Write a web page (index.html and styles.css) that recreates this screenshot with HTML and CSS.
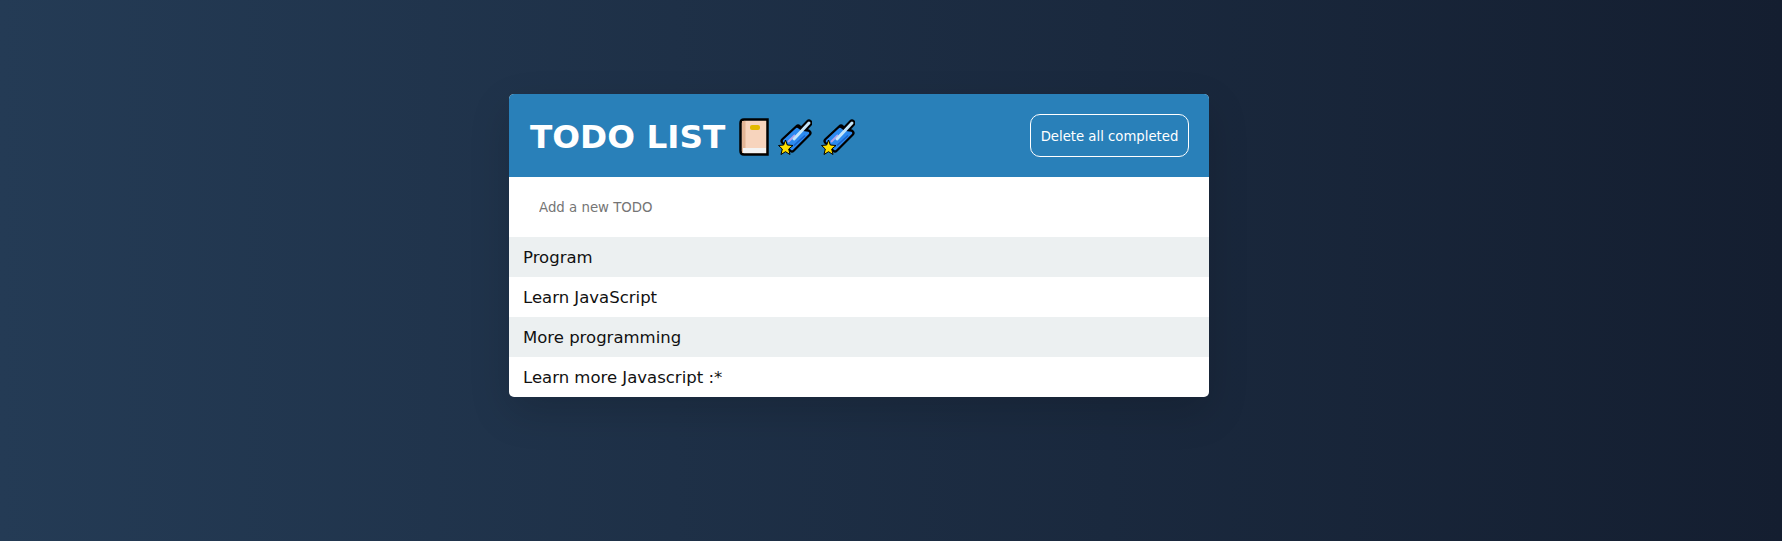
FILE: index.html
```html
<!DOCTYPE html>
<html lang="en">
<head>
    <meta charset="UTF-8">
    <title>TODO List</title>
    <link rel="stylesheet" href="styles.css">
</head>
<body>
    <div class="todo-card">
        <div class="todo-header">
            <h1 class="todo-title">
                TODO LIST
                <span class="todo-icons">
                    <svg class="icon-book" width="30" height="38" viewBox="0 0 30 38">
                        <path d="M5 1.500 H28.500 V36.500 H5 Q1.500 36.500 1.500 33 V5 Q1.500 1.500 5 1.500 Z" fill="#f7d4bd" stroke="#000" stroke-width="2.500"/>
                        <rect x="3" y="3" width="3.500" height="32" fill="#e3b596"/>
                        <rect x="4" y="30" width="23" height="5" fill="#f3f3f3"/>
                        <rect x="11" y="7" width="10" height="5" rx="2" fill="#e2b900"/>
                    </svg>
                    <svg class="icon-star" width="34" height="38" viewBox="0 0 34 38">
                        <path d="M10 27 L31 5 M6 23 L20 10 M14 31 L30 15" stroke="#000" stroke-width="7" stroke-linecap="round"/>
                        <path d="M6 24 L20 10 L30 15 L14 31 Z" fill="#000"/>
                        <path d="M6 23 L19 11 L23 14 L30 15 L14 31 Z" fill="#2b8af0" stroke="#2b8af0" stroke-width="2.500" stroke-linejoin="round"/>
                        <path d="M16 27.500 L27 17.500" stroke="#1b62c8" stroke-width="1.500"/>
                        <path d="M10 24 L17 17" stroke="#b3a4ec" stroke-width="2"/>
                        <path d="M16 21 L31 5" stroke="#c4e6fa" stroke-width="3" stroke-linecap="round"/>
                        <path d="M7.500 22 L9.300 27 L15 27.500 L10.700 31 L12 36.500 L7.500 33.700 L3 36.500 L4.300 31 L0.500 27.500 L5.700 27 Z" fill="#ffe000" stroke="#000" stroke-width="1"/>
                    </svg>
                    <svg class="icon-star" width="34" height="38" viewBox="0 0 34 38">
                        <path d="M10 27 L31 5 M6 23 L20 10 M14 31 L30 15" stroke="#000" stroke-width="7" stroke-linecap="round"/>
                        <path d="M6 24 L20 10 L30 15 L14 31 Z" fill="#000"/>
                        <path d="M6 23 L19 11 L23 14 L30 15 L14 31 Z" fill="#2b8af0" stroke="#2b8af0" stroke-width="2.500" stroke-linejoin="round"/>
                        <path d="M16 27.500 L27 17.500" stroke="#1b62c8" stroke-width="1.500"/>
                        <path d="M10 24 L17 17" stroke="#b3a4ec" stroke-width="2"/>
                        <path d="M16 21 L31 5" stroke="#c4e6fa" stroke-width="3" stroke-linecap="round"/>
                        <path d="M7.500 22 L9.300 27 L15 27.500 L10.700 31 L12 36.500 L7.500 33.700 L3 36.500 L4.300 31 L0.500 27.500 L5.700 27 Z" fill="#ffe000" stroke="#000" stroke-width="1"/>
                    </svg>
                </span>
            </h1>
            <button class="delete-btn">Delete all completed</button>
        </div>
        <input class="todo-input" type="text" placeholder="Add a new TODO">
        <ul class="todo-list">
            <li>Program</li>
            <li>Learn JavaScript</li>
            <li>More programming</li>
            <li>Learn more Javascript :*</li>
        </ul>
    </div>
</body>
</html>
```

FILE: styles.css
```css
* {
    box-sizing: border-box;
}
body {
    margin: 0;
    height: 100vh;
    padding: 94px 0 0 509px;
    overflow: hidden;
    background: linear-gradient(to right, #243b55, #141e30);
    font-family: "DejaVu Sans", Verdana, sans-serif;
}
.todo-card {
    width: 700px;
    background-color: #fff;
    border-radius: 5px;
    overflow: hidden;
    box-shadow: 0 15px 40px rgba(0, 0, 0, 0.15);
}
.todo-header {
    display: flex;
    justify-content: space-between;
    align-items: center;
    height: 83px;
    padding: 0 20px;
    background-color: #2980b9;
}
.todo-title {
    display: flex;
    align-items: center;
    gap: 14px;
    margin: 0 0 0 1px;
    padding-top: 2px;
    color: #fff;
    font-size: 32.7px;
    font-weight: bold;
}
.todo-icons {
    display: flex;
    align-items: center;
    gap: 9px;
}
.delete-btn {
    width: 159px;
    height: 43px;
    padding: 1px 0 0;
    background: transparent;
    border: 1px solid #fff;
    border-radius: 10px;
    color: #fff;
    font-family: inherit;
    font-size: 13.25px;
    font-weight: 500;
}
.todo-input {
    display: block;
    width: 100%;
    height: 60px;
    padding: 0 30px;
    border: none;
    outline: none;
    font-family: inherit;
    font-size: 13.333px;
}
.todo-input::placeholder {
    color: #757575;
}
.todo-list {
    margin: 0;
    padding: 0;
    list-style: none;
}
.todo-list li {
    height: 40px;
    padding: 1px 14px 0;
    line-height: 40px;
    font-size: 16.5px;
    color: #111;
}
.todo-list li:nth-child(odd) {
    background-color: #ecf0f1;
}
```
